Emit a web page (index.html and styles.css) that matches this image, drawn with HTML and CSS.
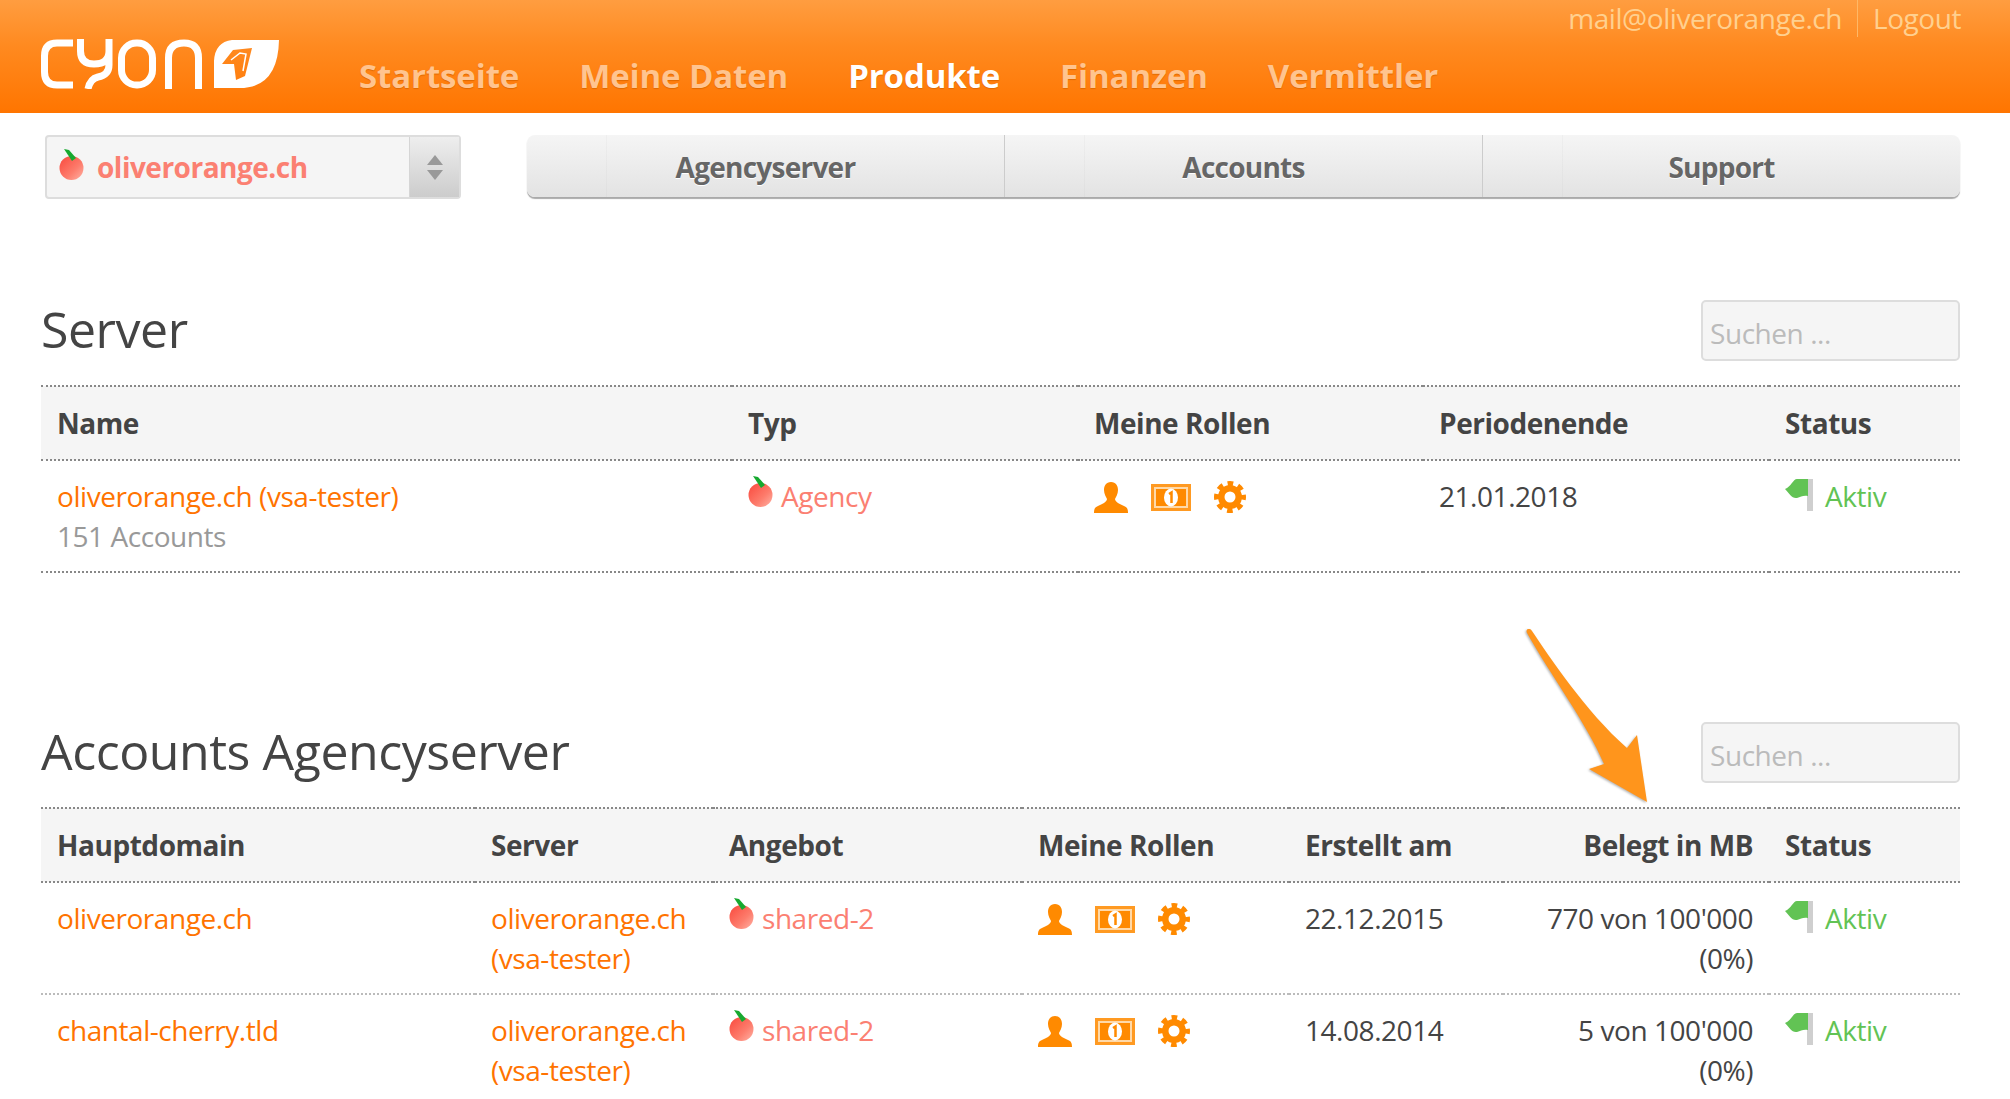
FILE: index.html
```html
<!DOCTYPE html>
<html lang="de">
  <head>
    <meta charset="UTF-8" />
    <title>cyon - Produkte</title>
    <link rel="stylesheet" href="styles.css">
  </head>
  <body>
    <!-- shared icons -->
    <svg class="defs" width="0" height="0">
      <defs>
        <linearGradient id="appleFill" x1="0" y1="0" x2="1" y2="1">
          <stop offset="0" stop-color="#f9483c" />
          <stop offset="0.6" stop-color="#fd7c6c" />
          <stop offset="1" stop-color="#ffb3a6" />
        </linearGradient>
        <symbol id="apple" viewBox="0 0 26 31">
          <circle cx="12.5" cy="19" r="12" fill="url(#appleFill)" />
          <path d="M5 0 L10 1 L17 9 L13 12 Z" fill="#16a92f" />
        </symbol>
        <symbol id="person" viewBox="0 0 34 31">
          <path d="M17 0 C12 0 10 4 10 8 C10 12 12 15 13 17 C13 20 8 22 4 24 C1 25 0 27 0 31 H34 C34 27 33 25 30 24 C26 22 21 20 21 17 C22 15 24 12 24 8 C24 4 22 0 17 0 Z" fill="#ff8a00" />
        </symbol>
        <symbol id="note" viewBox="0 0 40 27">
          <rect width="40" height="27" fill="#ff9a22" />
          <rect x="3" y="3" width="34" height="21" fill="#ffd9a8" />
          <rect x="5" y="5" width="30" height="17" fill="#ff8a00" />
          <ellipse cx="20" cy="13.500" rx="7" ry="9" fill="#fff" />
          <path d="M18 10 L20.500 8.500 V19" fill="none" stroke="#ff8a00" stroke-width="2.500" />
        </symbol>
        <symbol id="gear" viewBox="0 0 32 32">
          <circle cx="16" cy="16" r="13.500" fill="none" stroke="#ff8a00" stroke-width="5" stroke-dasharray="5.600 5" stroke-dashoffset="2.800" />
          <circle cx="16" cy="16" r="8.750" fill="none" stroke="#ff8a00" stroke-width="6.500" />
        </symbol>
        <symbol id="flag" viewBox="0 0 28 32">
          <rect x="22" y="0" width="6" height="32" fill="#cfcfcf" />
          <path d="M23 0 H12 C8 0 6 8 0 10 C4 14 7 20 12 19 C16 18 18 16 23 17 Z" fill="#62c354" />
        </symbol>
      </defs>
    </svg>

    <header class="topbar">
      <svg class="logo" viewBox="0 0 240 50" width="240" height="50">
        <g fill="none" stroke="#fff" stroke-width="7">
          <path d="M33 4 H17 Q4.500 4 4.500 17 V33 Q4.500 46 17 46 H33" />
          <path d="M40.500 0 V12 Q40.500 25 54 25 Q69 25 69 12 V0 M69 12 V26 Q69 36 58 38 Q50 40 48 50" />
          <rect x="81.500" y="4" width="31" height="42" rx="15" />
          <path d="M128.500 50 V19 Q128.500 4 144 4 Q158.500 4 158.500 19 V50" />
        </g>
        <path d="M192 1 H239 Q238 50 198 49 H174 V22 Q175 3 192 1 Z M212 9 L193 11 L182 25 L194 25 L196 41 L205 37 Z" fill="#fff" fill-rule="evenodd" />
        <path d="M191 21 L200 14 L206 15 L203 32" fill="none" stroke="#fff" stroke-width="1.500" />
      </svg>
      <nav class="mainnav">
        <a href="#">Startseite</a>
        <a href="#">Meine Daten</a>
        <a href="#" class="active">Produkte</a>
        <a href="#">Finanzen</a>
        <a href="#">Vermittler</a>
      </nav>
      <div class="usermenu">
        <a href="#">mail@oliverorange.ch</a>
        <a href="#" class="logout">Logout</a>
      </div>
    </header>

    <div class="toolbar">
      <div class="picker">
        <svg class="apple"><use href="#apple" /></svg>
        <span class="picker-label">oliverorange.ch</span>
        <span class="picker-arrows"><i class="up"></i><i class="down"></i></span>
      </div>
      <div class="tabs">
        <a href="#">Agencyserver</a>
        <a href="#">Accounts</a>
        <a href="#">Support</a>
      </div>
    </div>

    <section class="block block-server">
      <div class="block-head">
        <h1>Server</h1>
        <input type="text" class="search" placeholder="Suchen ..." />
      </div>
      <table class="list">
        <colgroup>
          <col class="c-691" /><col class="c-346" /><col class="c-345" /><col class="c-346" /><col />
        </colgroup>
        <thead>
          <tr><th>Name</th><th>Typ</th><th>Meine Rollen</th><th>Periodenende</th><th>Status</th></tr>
        </thead>
        <tbody>
          <tr>
            <td><a href="#">oliverorange.ch (vsa-tester)</a><br /><span class="muted">151 Accounts</span></td>
            <td><span class="plan"><svg class="apple"><use href="#apple" /></svg>Agency</span></td>
            <td>
              <div class="roles">
                <svg class="person"><use href="#person" /></svg>
                <svg class="note"><use href="#note" /></svg>
                <svg class="gear"><use href="#gear" /></svg>
              </div>
            </td>
            <td>21.01.2018</td>
            <td><span class="state"><svg class="flag"><use href="#flag" /></svg>Aktiv</span></td>
          </tr>
        </tbody>
      </table>
    </section>

    <section class="block block-accounts">
      <div class="block-head">
        <h1>Accounts Agencyserver</h1>
        <input type="text" class="search" placeholder="Suchen ..." />
      </div>
      <table class="list">
        <colgroup>
          <col class="c-434" /><col class="c-238" /><col class="c-309" /><col class="c-267" /><col class="c-214" /><col class="c-266" /><col />
        </colgroup>
        <thead>
          <tr><th>Hauptdomain</th><th>Server</th><th>Angebot</th><th>Meine Rollen</th><th>Erstellt am</th><th class="num">Belegt in MB</th><th>Status</th></tr>
        </thead>
        <tbody>
          <tr>
            <td><a href="#">oliverorange.ch</a></td>
            <td><a href="#">oliverorange.ch (vsa-tester)</a></td>
            <td><span class="plan"><svg class="apple"><use href="#apple" /></svg>shared-2</span></td>
            <td>
              <div class="roles">
                <svg class="person"><use href="#person" /></svg>
                <svg class="note"><use href="#note" /></svg>
                <svg class="gear"><use href="#gear" /></svg>
              </div>
            </td>
            <td>22.12.2015</td>
            <td class="num">770 von 100'000<br />(0%)</td>
            <td><span class="state"><svg class="flag"><use href="#flag" /></svg>Aktiv</span></td>
          </tr>
          <tr>
            <td><a href="#">chantal-cherry.tld</a></td>
            <td><a href="#">oliverorange.ch (vsa-tester)</a></td>
            <td><span class="plan"><svg class="apple"><use href="#apple" /></svg>shared-2</span></td>
            <td>
              <div class="roles">
                <svg class="person"><use href="#person" /></svg>
                <svg class="note"><use href="#note" /></svg>
                <svg class="gear"><use href="#gear" /></svg>
              </div>
            </td>
            <td>14.08.2014</td>
            <td class="num">5 von 100'000<br />(0%)</td>
            <td><span class="state"><svg class="flag"><use href="#flag" /></svg>Aktiv</span></td>
          </tr>
        </tbody>
      </table>
    </section>

    <!-- arrow drawn over the page -->
    <svg class="callout" viewBox="0 0 140 190" width="140" height="190">
      <path d="M2 4 C0 0 5 -2 7 2 C24 27 60 82 102 119 L112 106 L122 173 L64 140 L79 135 C62 95 25 45 2 4 Z" fill="#ff951c" />
    </svg>
  </body>
</html>
```

FILE: styles.css
```css
html,
body {
  height: 1099px;
  overflow: hidden;
}
body {
  position: relative;
  margin: 0;
  font-family: "Open Sans", "Noto Sans", sans-serif;
  font-size: 28px;
  line-height: 40px;
  letter-spacing: -0.45px;
  color: #444;
  background: #fff;
}
a {
  color: #ff7300;
  text-decoration: none;
}
.defs {
  position: absolute;
}

/* header */
.topbar {
  position: relative;
  display: flex;
  align-items: flex-start;
  height: 113px;
  padding-left: 40px;
  background: linear-gradient(#ff9d40, #ff8a20 40%, #ff7500);
}
.logo {
  margin-top: 39px;
}
.mainnav {
  display: flex;
  gap: 60px;
  margin: 54px 0 0 79px;
}
.mainnav a {
  font-size: 33px;
  line-height: 44px;
  font-weight: 700;
  letter-spacing: -0.13px;
  color: #ffc48f;
  text-shadow: 0 1px 1px #e06a00;
}
.mainnav a.active {
  color: #fff;
}
.usermenu {
  position: absolute;
  top: -1px;
  right: 49px;
  display: flex;
  font-size: 28px;
  line-height: 38px;
}
.usermenu a {
  color: #ffd08f;
}
.usermenu .logout {
  margin-left: 15px;
  padding-left: 15px;
  border-left: 1px solid #ffb866;
}

/* select and tabs */
.toolbar {
  display: flex;
  gap: 66px;
  margin: 22px 50px 0 45px;
  height: 64px;
}
.picker {
  display: flex;
  align-items: center;
  width: 416px;
  box-sizing: border-box;
  padding-left: 12px;
  border: 2px solid #ddd;
  border-radius: 4px;
  background: #f5f5f5;
}
.picker .apple {
  margin: -6px 0 0;
}
.picker-label {
  flex: 1;
  margin-left: 12px;
  font-weight: 700;
  letter-spacing: -0.5px;
  color: #fb8072;
}
.picker-arrows {
  display: flex;
  flex-direction: column;
  align-items: center;
  justify-content: center;
  gap: 5px;
  width: 49px;
  align-self: stretch;
  background: linear-gradient(#eee, #ccc);
  border-left: 1px solid #d5d5d5;
}
.picker-arrows i {
  width: 0;
  height: 0;
  border-left: 8px solid transparent;
  border-right: 8px solid transparent;
}
.picker-arrows .up {
  border-bottom: 10px solid #999;
}
.picker-arrows .down {
  border-top: 10px solid #999;
}
.tabs {
  flex: 1;
  display: flex;
  align-self: flex-start;
  height: 62px;
  border-radius: 8px;
  box-shadow: 0 2px 1px #aaa;
  overflow: hidden;
}
.tabs a {
  flex: 1;
  text-align: center;
  font-weight: 700;
  line-height: 64px;
  letter-spacing: -0.75px;
  color: #666;
  text-shadow: 0 1px 0 #fff;
  background: linear-gradient(#00000006, #00000006) 79px 0 / 1px 100% no-repeat,
    linear-gradient(#f5f5f5, #e3e3e3);
  border-right: 1px solid #ccc;
}
.tabs a:last-child {
  border-right: none;
}

/* sections */
.block {
  margin: 0 50px 0 41px;
}
.block-server {
  padding-top: 101px;
}
.block-accounts {
  padding-top: 149px;
}
.block-head {
  display: flex;
  justify-content: space-between;
  align-items: center;
  height: 61px;
  margin-bottom: 24px;
}
h1 {
  margin: 0;
  padding-bottom: 2px;
  font-size: 50px;
  line-height: 59px;
  font-weight: 400;
  color: #444;
}
.search {
  width: 259px;
  height: 61px;
  box-sizing: border-box;
  padding: 4px 7px 0;
  border: 2px solid #ddd;
  border-radius: 5px;
  background: #f5f5f5;
  font: 28px "Open Sans", sans-serif;
  letter-spacing: -0.45px;
  color: #444;
}
.search::placeholder {
  color: #bbb;
  opacity: 1;
}

/* tables */
.list {
  width: 100%;
  table-layout: fixed;
  border-collapse: collapse;
}
.c-691 { width: 691px; }
.c-345 { width: 345px; }
.c-346 { width: 346px; }
.c-434 { width: 434px; }
.c-238 { width: 238px; }
.c-309 { width: 309px; }
.c-267 { width: 267px; }
.c-214 { width: 214px; }
.c-266 { width: 266px; }
.list th {
  height: 72px;
  padding: 0 16px;
  text-align: left;
  font-weight: 700;
  background: #f5f5f5;
  border-top: 2px dotted #888;
  border-bottom: 2px dotted #888;
}
.list td {
  padding: 15px 16px 15px;
  vertical-align: top;
  border-bottom: 2px dotted #bbb;
}
.list .num {
  text-align: right;
}
.block-server td {
  border-bottom-color: #888;
}
.muted {
  color: #999;
}
.plan,
.state {
  display: flex;
  gap: 7px;
  color: #fb8072;
}
.state {
  gap: 12px;
  color: #62c354;
}
.apple {
  flex: none;
  width: 26px;
  height: 31px;
}
.flag {
  flex: none;
  width: 28px;
  height: 32px;
  margin: 3px 0 0 0;
}
.roles {
  display: flex;
  gap: 23px;
}
.person {
  width: 34px;
  height: 31px;
  margin-top: 6px;
}
.note {
  width: 40px;
  height: 27px;
  margin-top: 8px;
}
.gear {
  width: 32px;
  height: 32px;
  margin-top: 5px;
}

.callout {
  position: absolute;
  left: 1525px;
  top: 629px;
  filter: drop-shadow(-1px 1px 1px #0000004d);
}
```
